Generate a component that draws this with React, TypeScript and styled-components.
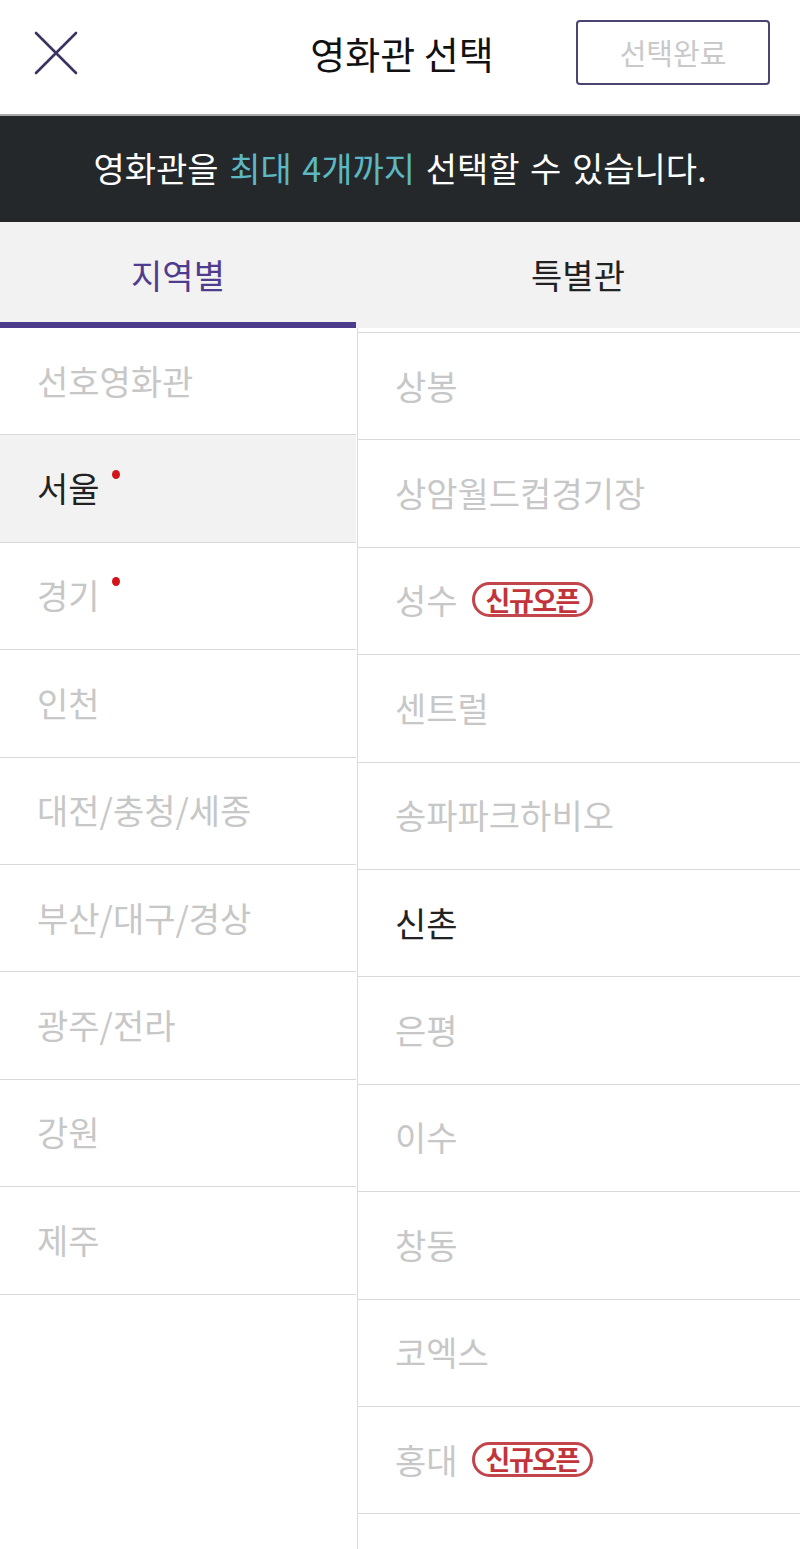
import * as React from 'react';
import styled, { createGlobalStyle } from 'styled-components';

const GlobalStyle = createGlobalStyle`
    html, body {
        margin: 0;
        padding: 0;
        background: #ffffff;
    }
    body {
        font-family: "Noto Sans CJK KR", "Noto Sans", sans-serif;
        -webkit-font-smoothing: antialiased;
    }
    * {
        box-sizing: border-box;
    }
`;

const Page = styled.div`
    width: 800px;
    height: 1549px;
    display: flex;
    flex-direction: column;
    overflow: hidden;
    background: #ffffff;
`;

const Header = styled.header`
    height: 116px;
    flex: 0 0 auto;
    display: grid;
    grid-template-columns: 1fr auto 1fr;
    align-items: center;
    padding: 0 30px 0 34px;
    border-bottom: 2px solid #a9a9a9;
`;

const CloseButton = styled.button`
    justify-self: start;
    width: 44px;
    height: 44px;
    padding: 0;
    border: none;
    background: none;
    display: flex;
    align-items: center;
    justify-content: center;
    margin-top: -8px;
`;

const Title = styled.h1`
    margin: 0 0 10px 0;
    font-size: 38px;
    font-weight: 400;
    color: #111111;
`;

const DoneButton = styled.button`
    justify-self: end;
    width: 194px;
    height: 65px;
    margin-bottom: 10px;
    border: 2px solid #4b4372;
    border-radius: 4px;
    background: #ffffff;
    font-family: inherit;
    font-size: 29px;
    color: #c9c9c9;
`;

const Notice = styled.div`
    height: 106px;
    flex: 0 0 auto;
    background: #25282b;
    color: #ffffff;
    display: flex;
    align-items: center;
    justify-content: center;
    font-size: 34px;
    word-spacing: 3px;
    padding-bottom: 4px;
`;

const Highlight = styled.span`
    color: #5cb8c2;
`;

const Tabs = styled.div`
    height: 106px;
    flex: 0 0 auto;
    display: grid;
    grid-template-columns: 356px 1fr;
    background: #f2f2f2;
`;

const Tab = styled.div<{ $active?: boolean }>`
    display: flex;
    align-items: center;
    justify-content: center;
    font-size: 34px;
    font-weight: 400;
    color: ${(p) => (p.$active ? '#4f3c8f' : '#222222')};
    border-bottom: 6px solid ${(p) => (p.$active ? '#4d3b8b' : 'transparent')};
    padding-top: 4px;
`;

const Body = styled.div`
    flex: 1 1 auto;
    display: grid;
    grid-template-columns: 356px 1fr;
    min-height: 0;
`;

const LeftList = styled.ul`
    margin: 0;
    padding: 0;
    list-style: none;
`;

const RightList = styled.ul`
    margin: 0 0 0 1px;
    padding: 4px 0 0 0;
    list-style: none;
    border-left: 1px solid #dadada;
`;

const RightInner = styled.div`
    border-top: 1px solid #dadada;
`;

const Row = styled.li<{ $selected?: boolean; $dark?: boolean }>`
    height: 107.4px;
    display: flex;
    align-items: center;
    padding-left: 37px;
    padding-bottom: 2px;
    border-bottom: 1px solid #dadada;
    background: ${(p) => (p.$selected ? '#f2f2f2' : '#ffffff')};
    color: ${(p) => (p.$dark ? '#222222' : '#c7c7c7')};
    font-size: 34px;
`;

const Dot = styled.span`
    width: 8px;
    height: 9px;
    border-radius: 50%;
    background: #d2141a;
    margin: -26px 0 0 12px;
`;

const Badge = styled.span`
    display: inline-flex;
    align-items: center;
    justify-content: center;
    height: 35px;
    margin-left: 14px;
    padding: 0 11px 1px 11px;
    border: 3px solid #c2454b;
    border-radius: 18px;
    color: #c2343b;
    font-size: 27px;
    font-weight: 700;
    letter-spacing: -1.5px;
    line-height: 1;
`;

type Region = { name: string; selected?: boolean; dark?: boolean; dot?: boolean };
type Theater = { name: string; dark?: boolean; isNew?: boolean };

const regions: Region[] = [
    { name: '선호영화관' },
    { name: '서울', selected: true, dark: true, dot: true },
    { name: '경기', dot: true },
    { name: '인천' },
    { name: '대전/충청/세종' },
    { name: '부산/대구/경상' },
    { name: '광주/전라' },
    { name: '강원' },
    { name: '제주' },
];

const theaters: Theater[] = [
    { name: '상봉' },
    { name: '상암월드컵경기장' },
    { name: '성수', isNew: true },
    { name: '센트럴' },
    { name: '송파파크하비오' },
    { name: '신촌', dark: true },
    { name: '은평' },
    { name: '이수' },
    { name: '창동' },
    { name: '코엑스' },
    { name: '홍대', isNew: true },
];

function CloseIcon(): React.ReactElement {
    return (
        <svg width="44" height="44" viewBox="0 0 44 44" fill="none">
            <path d="M2 2 L42 42 M42 2 L2 42" stroke="#3b3463" strokeWidth="2.6" strokeLinecap="round" />
        </svg>
    );
}

export default function App(): React.ReactElement {
    return (
        <Page>
            <GlobalStyle />
            <Header>
                <CloseButton aria-label="닫기">
                    <CloseIcon />
                </CloseButton>
                <Title>영화관 선택</Title>
                <DoneButton>선택완료</DoneButton>
            </Header>
            <Notice>
                영화관을&nbsp;<Highlight>최대 4개까지</Highlight>&nbsp;선택할 수 있습니다.
            </Notice>
            <Tabs>
                <Tab $active>지역별</Tab>
                <Tab>특별관</Tab>
            </Tabs>
            <Body>
                <LeftList>
                    {regions.map((r) => (
                        <Row key={r.name} $selected={r.selected} $dark={r.dark}>
                            {r.name}
                            {r.dot && <Dot />}
                        </Row>
                    ))}
                </LeftList>
                <RightList>
                    <RightInner>
                        {theaters.map((t) => (
                            <Row key={t.name} $dark={t.dark}>
                                {t.name}
                                {t.isNew && <Badge>신규오픈</Badge>}
                            </Row>
                        ))}
                    </RightInner>
                </RightList>
            </Body>
        </Page>
    );
}
